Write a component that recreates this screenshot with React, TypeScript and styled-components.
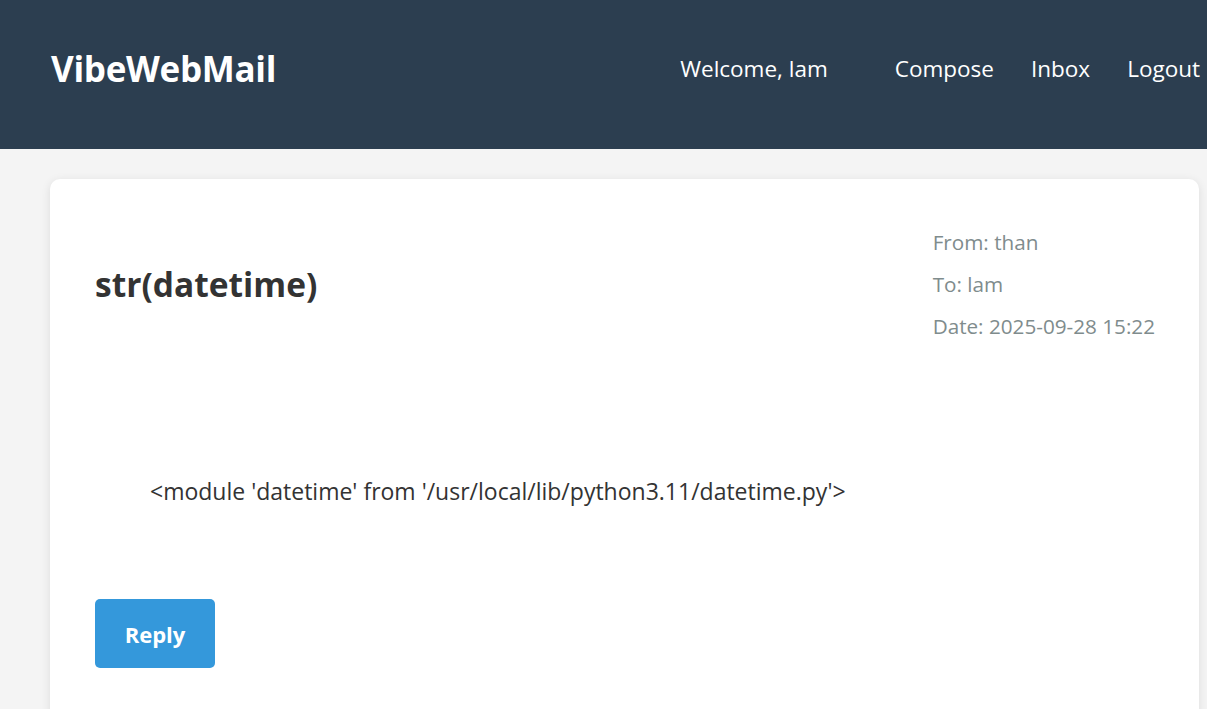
import React from "react";
import styled, { createGlobalStyle } from "styled-components";

const Global = createGlobalStyle`
  html, body { margin: 0; padding: 0; }
  body {
    background: #f4f4f4;
    font-family: "Open Sans", "Noto Sans", sans-serif;
    color: #333;
    overflow: hidden;
  }
`;

const Header = styled.header`
  height: 149px;
  background: #2c3e50;
  color: #fff;
  display: flex;
  align-items: center;
  justify-content: space-between;
  padding: 0 7px 12px 51px;
  box-sizing: border-box;
`;

const Logo = styled.h1`
  margin: 0;
  font-size: 35px;
  font-weight: 700;
  letter-spacing: -0.3px;
`;

const Nav = styled.nav`
  display: flex;
  align-items: center;
  gap: 37px;
  font-size: 22.5px;
`;

const Welcome = styled.span`
  margin-right: 30px;
`;

const NavLink = styled.a`
  color: #fff;
  text-decoration: none;
`;

const Main = styled.main`
  padding: 30px 8px 0 50px;
`;

const Card = styled.section`
  background: #fff;
  border-radius: 10px;
  box-shadow: 0 2px 10px rgba(0, 0, 0, 0.1);
  padding: 42px 44px 40px 45px;
  min-height: 600px;
`;

const HeadRow = styled.div`
  display: flex;
  align-items: center;
  justify-content: space-between;
`;

const Title = styled.h2`
  margin: 0;
  font-size: 33.5px;
  font-weight: 700;
  color: #333;
`;

const Meta = styled.div`
  display: flex;
  flex-direction: column;
  color: #7f8c8d;
  font-size: 20.7px;
  line-height: 42px;
`;

const Body = styled.div`
  margin: 129px 0 0;
  padding: 0 55px;
  font-size: 23px;
  line-height: 30px;
  color: #333;
`;

const ReplyButton = styled.button`
  margin-top: 93px;
  width: 120px;
  height: 69px;
  border: none;
  border-radius: 5px;
  background: #3498db;
  color: #fff;
  font-family: inherit;
  font-size: 22px;
  font-weight: 700;
  cursor: pointer;
`;

export default function App() {
  return (
    <>
      <Global />
      <Header>
        <Logo>VibeWebMail</Logo>
        <Nav>
          <Welcome>Welcome, lam</Welcome>
          <NavLink href="#">Compose</NavLink>
          <NavLink href="#">Inbox</NavLink>
          <NavLink href="#">Logout</NavLink>
        </Nav>
      </Header>
      <Main>
        <Card>
          <HeadRow>
            <Title>str(datetime)</Title>
            <Meta>
              <span>From: than</span>
              <span>To: lam</span>
              <span>Date: 2025-09-28 15:22</span>
            </Meta>
          </HeadRow>
          <Body>&lt;module 'datetime' from '/usr/local/lib/python3.11/datetime.py'&gt;</Body>
          <ReplyButton>Reply</ReplyButton>
        </Card>
      </Main>
    </>
  );
}
